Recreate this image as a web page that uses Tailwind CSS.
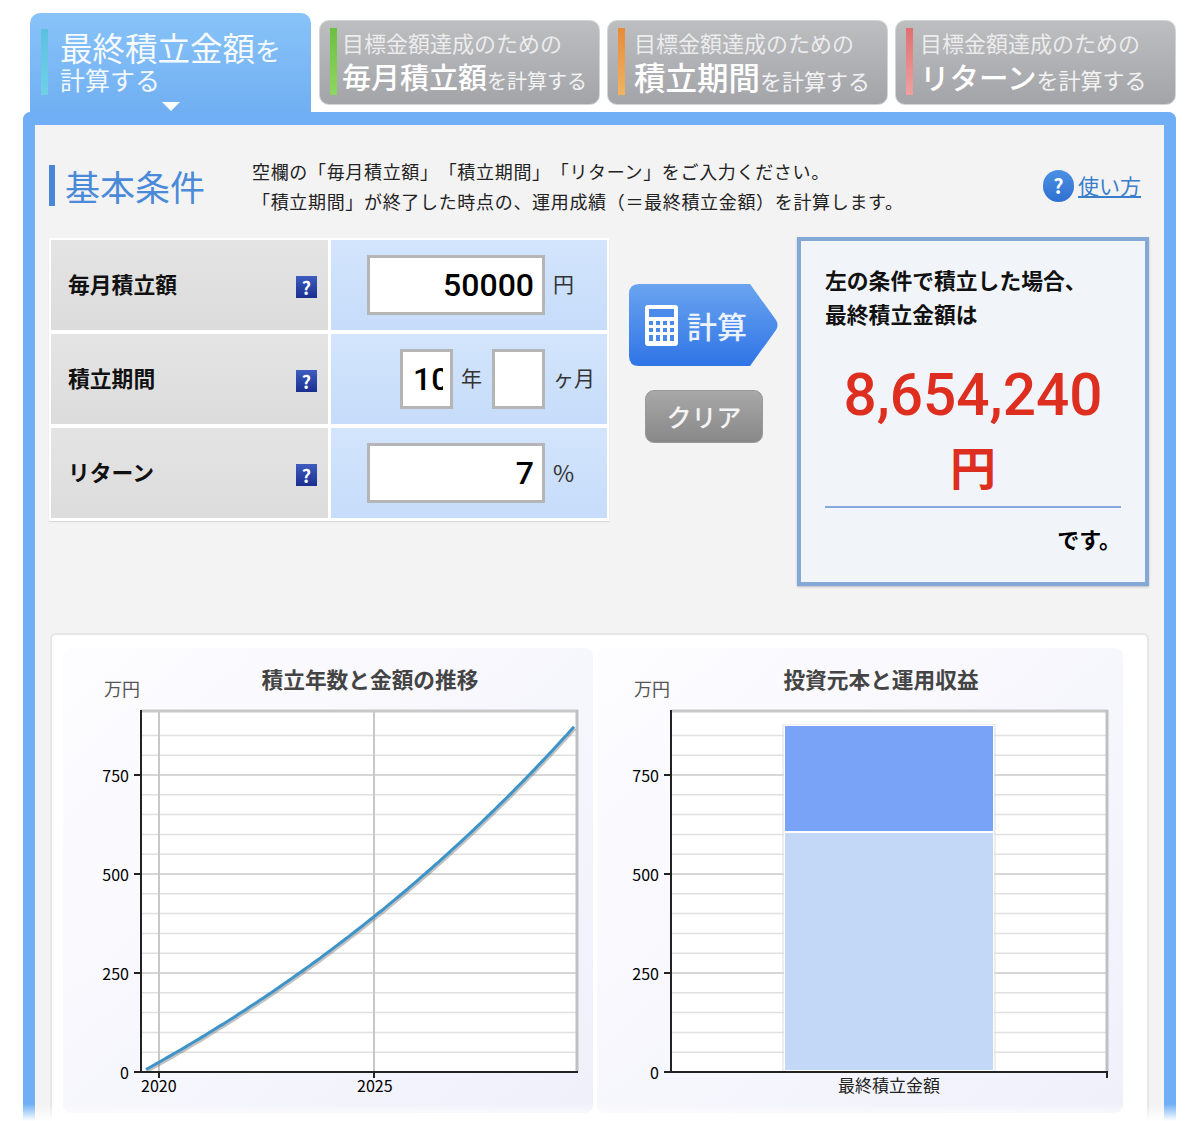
<!doctype html>
<html lang="ja">
<head>
<meta charset="utf-8">
<script src="https://cdn.jsdelivr.net/npm/@tailwindcss/browser@4"></script>
<title>積立シミュレーション</title>
</head>
<body class="bg-white">
<div class="relative w-[1200px] h-[1121px] overflow-hidden font-['Noto_Sans_CJK_JP','Noto_Sans',sans-serif] text-black">

    <!-- tabs -->
    <div class="flex items-end gap-[7px] pl-[30px] pt-[13px] h-[112px]">
        <div class="relative mr-[1px] w-[281px] h-[99px] rounded-t-[10px] bg-gradient-to-b from-[#88c3f8] to-[#70aff2] flex text-white">
            <div class="ml-[11px] mt-[16px] w-[7px] h-[66px] bg-gradient-to-b from-[#5cc0e0] to-[#70d0e8]"></div>
            <div class="ml-[12px] mt-[17px]">
                <div class="h-[34px] leading-[34px] whitespace-nowrap text-white/95"><span class="text-[32.5px]">最終積立金額</span><span class="text-[26px]">を</span></div>
                <div class="text-[25px] h-[30px] leading-[30px] text-white/90">計算する</div>
            </div>
            <div class="absolute left-[132px] bottom-[1px] w-0 h-0 border-x-[9px] border-x-transparent border-t-[9px] border-t-white"></div>
        </div>
        <div class="mb-[7px] w-[281px] h-[85px] rounded-[10px] border border-[#d4d4d6] bg-gradient-to-b from-[#bdbec0] to-[#a3a4a8] flex text-white">
            <div class="ml-[10px] mt-[7px] w-[7px] h-[67px] bg-gradient-to-b from-[#6cc040] to-[#8cd860]"></div>
            <div class="ml-[5px] mt-[6px] whitespace-nowrap">
                <div class="text-[22px] h-[30px] leading-[30px] text-white/75">目標金額達成のための</div>
                <div class="h-[38px] leading-[38px] font-medium"><span class="text-[29px]">毎月積立額</span><span class="text-[20px] font-normal text-white/85">を計算する</span></div>
            </div>
        </div>
        <div class="mb-[7px] w-[281px] h-[85px] rounded-[10px] border border-[#d4d4d6] bg-gradient-to-b from-[#bdbec0] to-[#a3a4a8] flex text-white">
            <div class="ml-[10px] mt-[7px] w-[7px] h-[67px] bg-gradient-to-b from-[#e88a38] to-[#f0b460]"></div>
            <div class="ml-[9px] mt-[6px] whitespace-nowrap">
                <div class="text-[22px] h-[30px] leading-[30px] text-white/75">目標金額達成のための</div>
                <div class="h-[38px] leading-[38px] font-medium"><span class="text-[31.5px]">積立期間</span><span class="text-[22px] font-normal text-white/85">を計算する</span></div>
            </div>
        </div>
        <div class="mb-[7px] w-[281px] h-[85px] rounded-[10px] border border-[#d4d4d6] bg-gradient-to-b from-[#bdbec0] to-[#a3a4a8] flex text-white">
            <div class="ml-[10px] mt-[7px] w-[7px] h-[67px] bg-gradient-to-b from-[#e07070] to-[#f0a0a0]"></div>
            <div class="ml-[7px] mt-[6px] whitespace-nowrap">
                <div class="text-[22px] h-[30px] leading-[30px] text-white/75">目標金額達成のための</div>
                <div class="h-[38px] leading-[38px] font-medium"><span class="text-[29.5px]">リターン</span><span class="text-[22px] font-normal text-white/85">を計算する</span></div>
            </div>
        </div>
    </div>

    <!-- main panel -->
    <div class="ml-[23px] w-[1153px] h-[1020px] rounded-t-[8px] border-x-[12px] border-t-[13px] border-[#70aff5] bg-[#f3f3f3] pl-[14px] pr-[15px] pt-[40px]">

        <div class="flex items-center h-[41px]">
            <div class="w-[6px] h-[41px] bg-[#4a86d8]"></div>
            <div class="ml-[10px] text-[35px] leading-none text-[#4a8ad8] w-[187px] whitespace-nowrap">基本条件</div>
            <div class="text-[18px] tracking-[0.67px] leading-[29.5px] whitespace-nowrap text-[#222] mt-[2px] [text-spacing-trim:space-all] [font-feature-settings:'palt'_0]">
                <div>空欄の「毎月積立額」「積立期間」「リターン」をご入力ください。</div>
                <div>「積立期間」が終了した時点の、運用成績（＝最終積立金額）を計算します。</div>
            </div>
            <div class="ml-auto mr-[8px] flex items-center gap-[4px]">
                <div class="w-[31px] h-[32px] rounded-full bg-gradient-to-b from-[#4c90e4] to-[#2f70d0] text-white font-bold text-[20px] flex items-center justify-center">?</div>
                <a class="text-[21px] text-[#3a7ecb] underline">使い方</a>
            </div>
        </div>

        <div class="flex items-start mt-[31px]">
            <!-- input table -->
            <div class="mt-[1px] w-[560px] h-[283px] bg-white p-[2px] flex flex-col gap-[4px] shadow-[0_1px_1px_#d8d8d8]">
                <div class="flex gap-[3px] h-[90px]">
                    <div class="w-[277px] bg-gradient-to-b from-[#e4e4e4] to-[#dcdcdc] flex items-center pl-[17px] pr-[11px]">
                        <div class="mb-[2px] text-[21.8px] font-bold text-[#111]">毎月積立額</div>
                        <div class="ml-auto mt-[4px] w-[21px] h-[22px] bg-gradient-to-b from-[#3f5cc0] to-[#1a2f90] text-white font-bold text-[18px] leading-[22px] text-center">?</div>
                    </div>
                    <div class="w-[276px] bg-gradient-to-b from-[#d3e5fc] to-[#c6dcfa] flex items-center pl-[36px]">
                        <input readonly value="50000" class="w-[178px] h-[60px] border-[3px] border-[#b5b5b5] bg-white text-right pr-[8px] font-['Roboto'] font-medium text-[32px] outline-none">
                        <span class="ml-[8px] mb-[2px] text-[21px] text-[#333]">円</span>
                    </div>
                </div>
                <div class="flex gap-[3px] h-[90px]">
                    <div class="w-[277px] bg-gradient-to-b from-[#e4e4e4] to-[#dcdcdc] flex items-center pl-[17px] pr-[11px]">
                        <div class="mb-[2px] text-[21.8px] font-bold text-[#111]">積立期間</div>
                        <div class="ml-auto mt-[4px] w-[21px] h-[22px] bg-gradient-to-b from-[#3f5cc0] to-[#1a2f90] text-white font-bold text-[18px] leading-[22px] text-center">?</div>
                    </div>
                    <div class="w-[276px] bg-gradient-to-b from-[#d3e5fc] to-[#c6dcfa] flex items-center pl-[69px]">
                        <input readonly value="10" class="w-[53px] h-[60px] border-[3px] border-[#b5b5b5] bg-white pl-[10px] pr-[7px] font-['Roboto'] font-medium text-[32px] outline-none">
                        <span class="ml-[8px] mb-[2px] text-[21px] text-[#333]">年</span>
                        <input readonly class="ml-[10px] w-[53px] h-[60px] border-[3px] border-[#b5b5b5] bg-white outline-none">
                        <span class="ml-[8px] mb-[2px] text-[21px] text-[#333] whitespace-nowrap">ヶ月</span>
                    </div>
                </div>
                <div class="flex gap-[3px] h-[90px]">
                    <div class="w-[277px] bg-gradient-to-b from-[#e4e4e4] to-[#dcdcdc] flex items-center pl-[17px] pr-[11px]">
                        <div class="mb-[2px] text-[21.8px] font-bold text-[#111]">リターン</div>
                        <div class="ml-auto mt-[4px] w-[21px] h-[22px] bg-gradient-to-b from-[#3f5cc0] to-[#1a2f90] text-white font-bold text-[18px] leading-[22px] text-center">?</div>
                    </div>
                    <div class="w-[276px] bg-gradient-to-b from-[#d3e5fc] to-[#c6dcfa] flex items-center pl-[36px]">
                        <input readonly value="7" class="w-[178px] h-[60px] border-[3px] border-[#b5b5b5] bg-white text-right pr-[8px] font-['Roboto'] font-medium text-[32px] outline-none">
                        <span class="ml-[8px] mb-[2px] text-[23px] text-[#333]">%</span>
                    </div>
                </div>
            </div>

            <!-- buttons -->
            <div class="ml-[20px] w-[149px] pt-[47px] flex flex-col">
                <div class="relative w-[149px] h-[82px] flex items-center text-white">
                    <svg class="absolute inset-0" width="149" height="82" viewBox="0 0 149 82">
                        <defs><linearGradient id="calc" x1="0" y1="0" x2="0" y2="1"><stop offset="0" stop-color="#6aa4f0"/><stop offset="1" stop-color="#2f74e6"/></linearGradient></defs>
                        <path d="M10 0H121L147 36Q150 41 147 46L121 82H10Q0 82 0 72V10Q0 0 10 0Z" fill="url(#calc)"/>
                    </svg>
                    <svg class="relative ml-[16px]" width="33" height="41" viewBox="0 0 33 41">
                        <rect width="33" height="41" rx="3" fill="#fff"/>
                        <rect x="4" y="4" width="25" height="8" fill="#4a8aea"/>
                        <g fill="#4a8aea">
                            <rect x="4" y="16" width="4" height="4"/><rect x="11" y="16" width="4" height="4"/><rect x="18" y="16" width="4" height="4"/><rect x="25" y="16" width="4" height="4"/>
                            <rect x="4" y="23" width="4" height="4"/><rect x="11" y="23" width="4" height="4"/><rect x="18" y="23" width="4" height="4"/><rect x="25" y="23" width="4" height="4"/>
                            <rect x="4" y="30" width="4" height="6"/><rect x="11" y="30" width="4" height="6"/><rect x="18" y="30" width="4" height="6"/><rect x="25" y="30" width="4" height="6"/>
                        </g>
                    </svg>
                    <span class="relative ml-[9px] text-[30px] leading-none font-medium text-white/90">計算</span>
                </div>
                <div class="mt-[24px] ml-[16px] w-[118px] h-[53px] rounded-[9px] border border-[#999] bg-gradient-to-b from-[#a8a8a8] to-[#888888] flex items-center justify-center text-[25px] font-medium text-white/90">クリア</div>
            </div>

            <!-- result -->
            <div class="ml-[19px] w-[352px] h-[349px] border-[4px] border-[#85a9d6] bg-[#f1f5fa] px-[24px] shadow-[0_1px_2px_#bbb]">
                <div class="mt-[22px] text-[21.8px] font-bold leading-[34px] text-[#111] whitespace-nowrap">左の条件で積立した場合、<br>最終積立金額は</div>
                <div class="mt-[34px] text-center font-['Roboto'] font-medium text-[#dd2e1f] text-[58.5px] leading-[60px]">8,654,240</div>
                <div class="mt-[10px] text-center font-bold text-[#dd2e1f] text-[46px] leading-[60px]">円</div>
                <div class="mt-[11px] h-[2px] w-[296px] bg-[#86a9de]"></div>
                <div class="mt-[15px] text-right text-[22px] font-bold leading-[30px]">です。</div>
            </div>
        </div>

        <!-- charts -->
        <div class="mt-[47px] ml-[1px] w-[1099px] h-[500px] rounded-[6px] bg-white border-2 border-[#e6e6e6] pl-[11px] pt-[13px] flex gap-[4px]">
            <div class="w-[530px] h-[465px] rounded-[8px] bg-gradient-to-br from-[#fdfdff] to-[#f0f0fb]">
                <svg id="chart-line" width="530" height="465" viewBox="63 648 530 465" font-family="'Noto Sans CJK JP','Noto Sans',sans-serif">
                    <text x="370" y="688" text-anchor="middle" font-size="21.7" font-weight="700" fill="#444">積立年数と金額の推移</text>
                    <text x="104" y="696" font-size="18" fill="#555">万円</text>
                    <text x="141" y="1092" font-size="16">2020</text>
                    <text x="357" y="1092" font-size="16">2025</text>
                </svg>
            </div>
            <div class="w-[526px] h-[465px] rounded-[8px] bg-gradient-to-br from-[#fdfdff] to-[#f0f0fb]">
                <svg id="chart-bar" width="526" height="465" viewBox="597 648 526 465" font-family="'Noto Sans CJK JP','Noto Sans',sans-serif">
                    <text x="881" y="688" text-anchor="middle" font-size="21.7" font-weight="700" fill="#444">投資元本と運用収益</text>
                    <text x="634" y="696" font-size="18" fill="#555">万円</text>
                    <text x="889" y="1092" text-anchor="middle" font-size="17" fill="#222">最終積立金額</text>
                </svg>
            </div>
        </div>
    </div>

    <!-- fade at the bottom edge of the capture -->
    <div class="absolute left-0 bottom-0 w-full h-[17px] bg-gradient-to-b from-white/0 to-white"></div>
</div>

<script type="text/javascript">
    const NS = "http://www.w3.org/2000/svg";

    // add an svg node with the provided attributes
    const add = (svg, name, attrs, text) => {
        const el = document.createElementNS(NS, name);
        Object.keys(attrs).forEach(key => el.setAttribute(key, attrs[key]));
        if (text) el.textContent = text;
        svg.appendChild(el);
        return el;
    };

    // white plot with grid lines, ticks are added after the data
    const drawPlot = (svg, left) => {
        const right = left + 437;
        add(svg, "rect", {x: left, y: 710, width: 437, height: 362, fill: "#fff"});
        [50, 100, 150, 200, 300, 350, 400, 450, 550, 600, 650, 700, 800, 850].forEach(v => {
            const y = 1072 - v * 0.396;
            add(svg, "line", {x1: left, x2: right, y1: y, y2: y, stroke: "#e0e0e0", "stroke-width": 1.5});
        });
        [250, 500, 750].forEach(v => {
            const y = 1072 - v * 0.396;
            add(svg, "line", {x1: left, x2: right, y1: y, y2: y, stroke: "#c8c8c8", "stroke-width": 1.5});
        });
        add(svg, "line", {x1: left, x2: right, y1: 711, y2: 711, stroke: "#c8c8c8", "stroke-width": 3});
        add(svg, "line", {x1: right - 1, x2: right - 1, y1: 710, y2: 1072, stroke: "#c0c0c4", "stroke-width": 3});
    };

    // axes and tick labels go on top of the data
    const drawAxes = (svg, left) => {
        add(svg, "line", {x1: left, x2: left, y1: 710, y2: 1073, stroke: "#222", "stroke-width": 2});
        add(svg, "line", {x1: left - 7, x2: left + 437, y1: 1072, y2: 1072, stroke: "#222", "stroke-width": 2});
        [0, 250, 500, 750].forEach(v => {
            const y = 1072 - v * 0.396;
            add(svg, "line", {x1: left - 7, x2: left, y1: y, y2: y, stroke: "#222", "stroke-width": 2});
            add(svg, "text", {x: left - 12, y: y + 7, "text-anchor": "end", "font-size": 16}, String(v));
        });
    };

    // line chart: 50000 yen a month at 7%, in 10000 yen units
    const lineSvg = document.querySelector("#chart-line");
    drawPlot(lineSvg, 141);
    [159, 374].forEach(x => {
        add(lineSvg, "line", {x1: x, x2: x, y1: 710, y2: 1072, stroke: "#c8c8c8", "stroke-width": 2});
        add(lineSvg, "line", {x1: x, x2: x, y1: 1072, y2: 1078, stroke: "#222", "stroke-width": 2});
    });
    const rate = 0.07 / 12;
    let points = [];
    for (let m = 0; m <= 120; m++) {
        const value = 5 * (Math.pow(1 + rate, m) - 1) / rate;
        points.push((146 + 428 * m / 120).toFixed(1) + "," + (1069.5 - value * 0.396).toFixed(1));
    }
    add(lineSvg, "polyline", {points: points.join(" "), fill: "none", stroke: "#666", "stroke-opacity": 0.4, "stroke-width": 3, transform: "translate(1 2)"});
    add(lineSvg, "polyline", {points: points.join(" "), fill: "none", stroke: "#3e93c8", "stroke-width": 3});
    drawAxes(lineSvg, 141);

    // stacked bar chart
    const barSvg = document.querySelector("#chart-bar");
    drawPlot(barSvg, 671);
    add(barSvg, "rect", {x: 782, y: 724, width: 214, height: 348, fill: "#ddd", "fill-opacity": 0.5});
    add(barSvg, "rect", {x: 784, y: 725, width: 210, height: 346, fill: "#fff"});
    add(barSvg, "rect", {x: 785, y: 726, width: 208, height: 105, fill: "#78a3f6"});
    add(barSvg, "rect", {x: 785, y: 833, width: 208, height: 237, fill: "#c2d8f6"});
    drawAxes(barSvg, 671);
    add(barSvg, "line", {x1: 1107, x2: 1107, y1: 1072, y2: 1078, stroke: "#222", "stroke-width": 2});
</script>
</body>
</html>
